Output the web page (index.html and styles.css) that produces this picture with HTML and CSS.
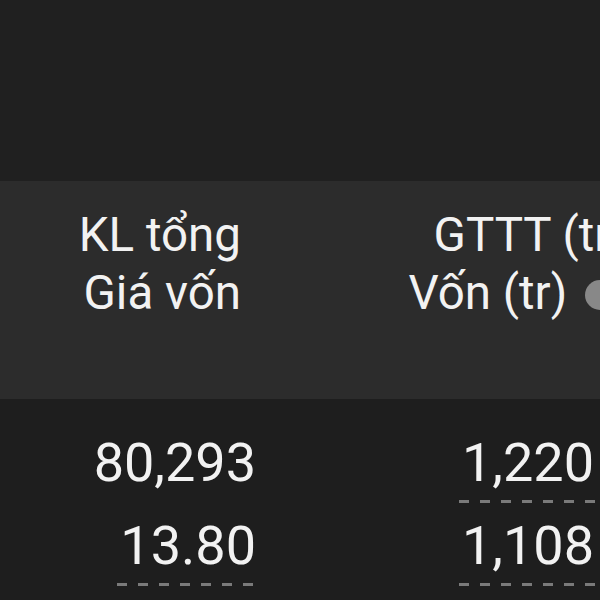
FILE: index.html
```html
<!DOCTYPE html>
<html lang="vi">
<head>
<meta charset="utf-8">
<link rel="stylesheet" href="styles.css">
</head>
<body>
<div class="screen">
  <div class="topbar"></div>
  <div class="table">
    <div class="row head">
      <div class="cell c1">
        <div class="line">KL tổng</div>
        <div class="line">Giá vốn</div>
      </div>
      <div class="cell c2">
        <div class="line l1">GTTT (tr)</div>
        <div class="line l2">Vốn (tr) <span class="dot"></span></div>
      </div>
    </div>
    <div class="row body">
      <div class="cell c1">
        <div class="num"><span class="val">80,293</span></div>
        <div class="num"><span class="val dashed">13.80</span></div>
      </div>
      <div class="cell c2">
        <div class="num"><span class="val dashed">1,220</span></div>
        <div class="num"><span class="val dashed">1,108</span></div>
      </div>
    </div>
  </div>
</div>
</body>
</html>
```
FILE: styles.css
```css
html, body {
  margin: 0;
  padding: 0;
  background: #1e1e1e;
}
.screen {
  width: 600px;
  height: 600px;
  overflow: hidden;
  background: #1e1e1e;
  font-family: Roboto, "Noto Sans", sans-serif;
  color: #f2f2f2;
}
.topbar {
  height: 181px;
  background: #202020;
}
.table {
  width: 800px;
}
.row {
  display: grid;
  grid-template-columns: 256px 420px;
}
.head {
  height: 218px;
  background: #2c2c2c;
  font-size: 47.5px;
  align-content: start;
  padding-top: 25px;
  box-sizing: border-box;
}
.head .line {
  line-height: 58px;
  white-space: nowrap;
}
.head .c1 {
  text-align: right;
  padding-right: 15px;
}
.head .c2 {
  text-align: right;
}
.head .l1 {
  padding-right: 49px;
}
.head .l2 {
  padding-right: 61px;
}
.dot {
  display: inline-block;
  width: 30px;
  height: 30px;
  border-radius: 50%;
  background: #888888;
  vertical-align: -1px;
  margin-left: 6px;
}
.body {
  padding-top: 34px;
  font-size: 54px;
}
.num {
  line-height: 60px;
  white-space: nowrap;
  margin-bottom: 23px;
}
.c1 .num {
  text-align: right;
}
.c2 .num {
  text-align: left;
  padding-left: 206px;
}
.val {
  display: inline-block;
  position: relative;
}
.dashed::after {
  content: "";
  position: absolute;
  left: -3px;
  right: -3px;
  bottom: -10px;
  height: 3px;
  background: repeating-linear-gradient(90deg, #7a7a7a 0 10px, transparent 10px 21px);
}
.c2 .dashed::after {
  right: -40px;
}
```
